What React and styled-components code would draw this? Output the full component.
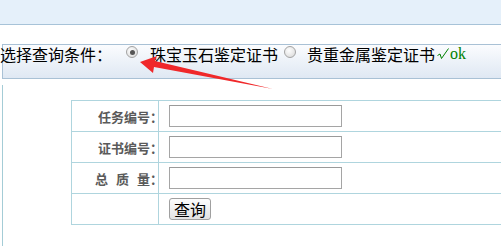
import React from 'react'
import styled, { createGlobalStyle } from 'styled-components'

const GlobalStyle = createGlobalStyle`
  html, body {
    margin: 0;
    padding: 0;
    background: #fff;
    overflow: hidden;
  }
  body {
    font-family: "Noto Sans CJK SC", "Liberation Sans", sans-serif;
  }
`

const Page = styled.div`
  position: relative;
  width: 501px;
  height: 246px;
  overflow: hidden;
`

const Header = styled.div`
  height: 24px;
  background: #e5f0fa;
  border-bottom: 1px solid #a7c3d8;
`

const Toolbar = styled.div`
  margin: 19px 0 0 2px;
  height: 33px;
  border: 1px solid #a9c1d5;
  border-right: none;
  background: linear-gradient(#fbfcfe 0%, #eef3f9 45%, #dfe8f3 100%);
  display: flex;
  align-items: flex-start;
  font-size: 16px;
  line-height: 18px;
  color: #000;
  white-space: nowrap;
`

const Caption = styled.span`
  margin-left: -3px;
`

const Radio = styled.span`
  box-sizing: border-box;
  width: 12px;
  height: 12px;
  margin: 1px ${(p) => p.$after}px 0 ${(p) => p.$before}px;
  border-radius: 50%;
  border: 1px solid #a3a3a3;
  background: radial-gradient(circle at 40% 35%, #fdfdfd 0%, #e2e2e2 70%, #d0d0d0 100%);
  display: flex;
  align-items: center;
  justify-content: center;
  flex-shrink: 0;
  &::after {
    content: '';
    display: ${(p) => (p.$checked ? 'block' : 'none')};
    width: 5px;
    height: 5px;
    border-radius: 50%;
    background: #555;
  }
`

const Label = styled.span``

const Ok = styled.span`
  margin-left: 2px;
  color: #008000;
  font-family: "Liberation Serif", serif;
`

const Check = styled.svg`
  display: inline-block;
  vertical-align: -1px;
  margin-right: 1px;
`

const Content = styled.div`
  margin: 6px 0 0 2px;
  height: 161px;
  border-left: 1px solid #a4ccd6;
  padding: 15px 0 0 68px;
  box-sizing: border-box;
`

const Form = styled.table`
  border-collapse: collapse;
  width: 460px;
  td {
    border: 1px solid #afd5de;
    height: 30px;
    padding: 0;
    vertical-align: middle;
  }
`

const LabelCell = styled.td`
  width: 86px;
  padding-right: 0 !important;
  text-align: right;
  font-size: 13px;
  font-weight: bold;
  color: #5a5a5a;
  white-space: nowrap;
`

const Colon = styled.span`
  display: inline-block;
  width: 8px;
  text-align: left;
`

const Gap = styled.span`
  display: inline-block;
  width: 8px;
`

const FieldCell = styled.td`
  padding-left: 10px !important;
`

const Input = styled.input`
  box-sizing: border-box;
  display: block;
  width: 173px;
  height: 22px;
  margin: 0;
  border: 1px solid #a5a5a5;
  border-top-color: #9a9a9a;
  background: #fff;
`

const Button = styled.button`
  box-sizing: border-box;
  display: block;
  width: 42px;
  height: 22px;
  margin: 0;
  padding: 0;
  border: 1px solid #a0a0a0;
  border-radius: 3px;
  background: linear-gradient(#fdfdfd, #e2e2e2);
  font-family: "Noto Sans CJK SC", sans-serif;
  font-size: 16px;
  line-height: 18px;
  color: #000;
`

const FooterLine = styled.div`
  margin: 0 0 0 21px;
  border-top: 1px solid #a9d0da;
`

const Arrow = styled.svg`
  position: absolute;
  left: 0;
  top: 0;
  pointer-events: none;
`

const fields = [['任务编号'], ['证书编号'], ['总', '质', '量']]

export default function App() {
  return (
    <Page>
      <GlobalStyle />
      <Header />
      <Toolbar>
        <Caption>选择查询条件：</Caption>
        <Radio $before={14} $after={12} $checked />
        <Label>珠宝玉石鉴定证书</Label>
        <Radio $before={6} $after={11} />
        <Label>贵重金属鉴定证书</Label>
        <Ok>
          <Check width="12" height="12" viewBox="0 0 12 12">
            <path d="M0.5 7.5 L3 6 L4.5 10.5 L11.5 0.5" fill="none" stroke="#008000" strokeWidth="1" />
          </Check>
          ok
        </Ok>
      </Toolbar>
      <Content>
        <Form>
          <tbody>
            {fields.map((parts) => (
              <tr key={parts.join('')}>
                <LabelCell>
                  {parts.map((p, i) => (
                    <React.Fragment key={p}>
                      {i > 0 && <Gap />}
                      {p}
                    </React.Fragment>
                  ))}
                  <Colon>：</Colon>
                </LabelCell>
                <FieldCell>
                  <Input />
                </FieldCell>
              </tr>
            ))}
            <tr>
              <LabelCell />
              <FieldCell>
                <Button>查询</Button>
              </FieldCell>
            </tr>
          </tbody>
        </Form>
      </Content>
      <FooterLine />
      <Arrow width="501" height="246" viewBox="0 0 501 246">
        <polygon
          points="140,62 157,56 155,61 273,89 154,67 153,73"
          fill="#f0282a"
        />
      </Arrow>
    </Page>
  )
}
